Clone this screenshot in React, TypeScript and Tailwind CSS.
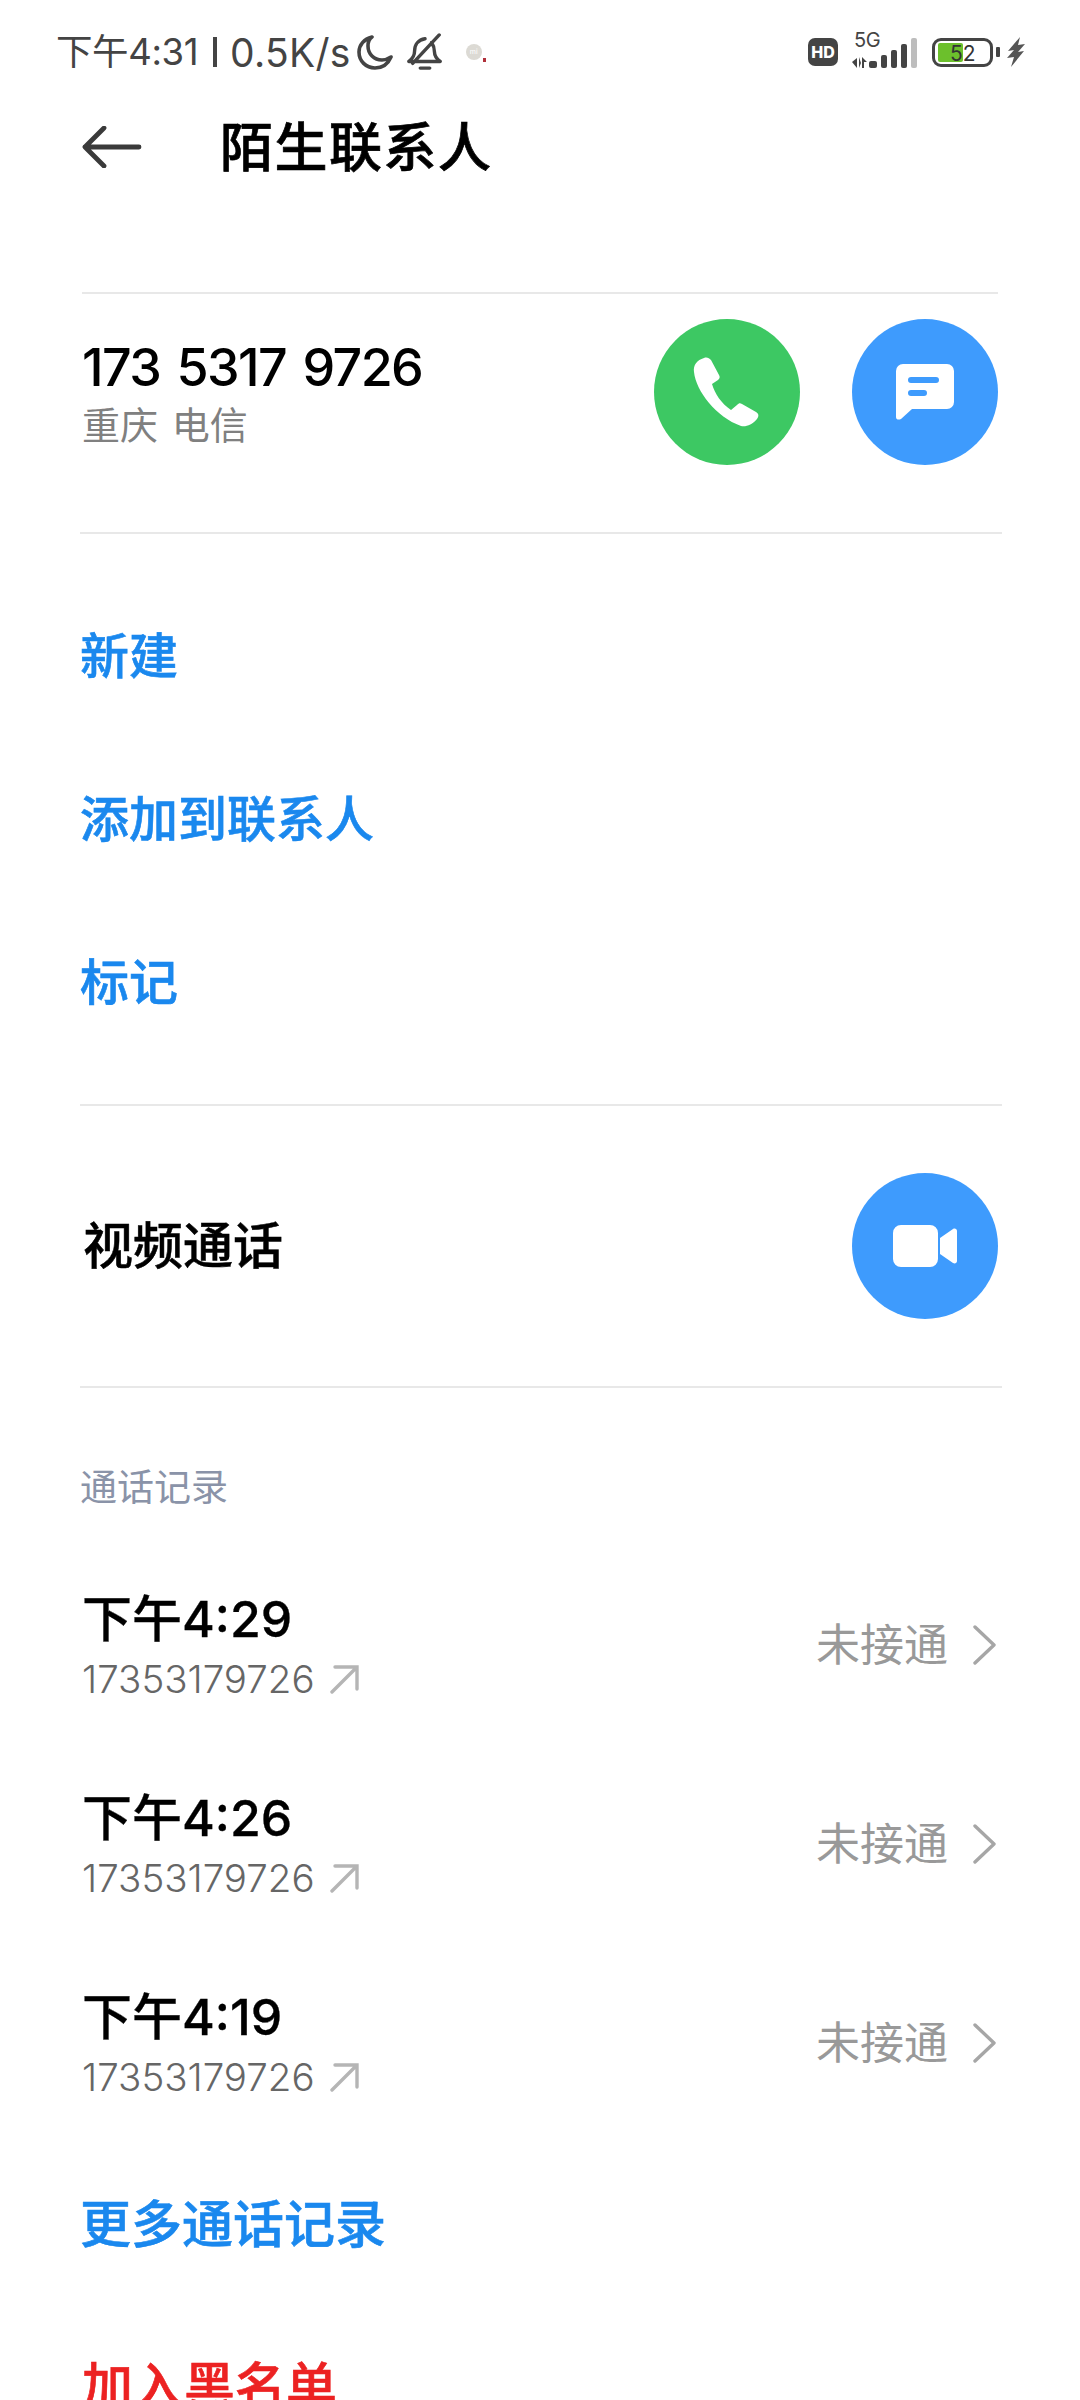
const cjk = "font-['Inter','Noto_Sans_CJK_SC',sans-serif]";

const calls = [
  { time: "下午4:29", number: "17353179726" },
  { time: "下午4:26", number: "17353179726" },
  { time: "下午4:19", number: "17353179726" },
];

function StatusBar() {
  return (
    <div className="flex h-[104px] items-center pl-[56px] pr-[55px] text-[#444444]">
      <span className="flex items-center leading-none">
        <span className="text-[36.5px] tracking-[-0.4px]">下午4:31</span>
        <span className="ml-[15px] mr-[13px] h-[30px] w-[4px] bg-[#444444]" />
        <span className="text-[39px] tracking-[0.3px]">0.5K/s</span>
      </span>
      <svg viewBox="0 0 36 36" className="ml-[6px] h-[36px] w-[36px]" fill="none" stroke="#444444" strokeWidth="3.6" strokeLinecap="round" strokeLinejoin="round">
        <path d="M15 3C7 5 2 11 2 18c0 9 7 16 16 16 7 0 13-4 16-11-3 2-6 3-9 3-8 0-14-6-14-14 0-3 1-7 4-9z" />
      </svg>
      <svg viewBox="0 0 38 40" className="ml-[14px] h-[38px] w-[36px]" fill="none" stroke="#444444" strokeWidth="3.6" strokeLinecap="round" strokeLinejoin="round">
        <path d="M2 30c4-3 6-6 6-11 0-7 4-12 11-13M26 10c2 3 3 6 3 10 0 4 2 7 6 10H2M34 2 6 32M14 37h10" />
      </svg>
      <span className="relative ml-[23px] flex h-[16px] w-[16px] items-center justify-center rounded-full bg-[#dcdad4] text-[7px] text-white">
        mi
        <span className="absolute bottom-[-2px] right-[-4px] h-[4px] w-[3px] bg-[#b0303a]" />
      </span>
      <span className="ml-auto flex h-[28px] w-[30px] items-center justify-center rounded-[7px] bg-[#444444] text-[16px] font-extrabold leading-none text-white">HD</span>
      <div className="relative ml-[14px] h-[36px] w-[68px]">
        <span className="absolute left-[2px] top-[-4px] text-[20px] leading-[20px] tracking-[-0.5px]">5G</span>
        <svg viewBox="0 0 68 36" className="h-[36px] w-[68px]" fill="#444444">
          <path d="M0 28l5-4v10zM7 23v11l2-5zM10 23l5 5h-3v6h-2z" />
          <rect x="17" y="27" width="8" height="7" rx="2" />
          <rect x="29" y="21" width="6" height="13" rx="2" />
          <rect x="39" y="16" width="6" height="18" rx="2" />
          <rect x="49" y="10" width="6" height="24" rx="2" />
          <rect x="59" y="4" width="6" height="30" rx="2" fill="#bdbdbd" />
        </svg>
      </div>
      <div className="relative ml-[12px] flex h-[29px] w-[61px] items-center rounded-[9px] border-[3px] border-[#444444] pl-[3px]">
        <div className="h-[19px] w-[25px] rounded-[2px] bg-[#6cc02c]" />
        <span className="absolute left-[15px] top-[-1px] text-[21px] leading-[27px] text-[#333333]">52</span>
      </div>
      <div className="ml-[3px] h-[10px] w-[4px] rounded-[1px] bg-[#444444]" />
      <svg viewBox="0 0 18 30" className="ml-[7px] h-[30px] w-[18px]" fill="#555555">
        <path d="M13 0 1 14l6-1-7 8 7-1-3 10L17 14l-6 1 7-8-7 1z" />
      </svg>
    </div>
  );
}

function RoundButton({ bg, children }: { bg: string; children: React.ReactNode }) {
  return (
    <div className={`flex h-[146px] w-[146px] shrink-0 items-center justify-center rounded-full ${bg}`}>
      {children}
    </div>
  );
}

function Divider({ className }: { className: string }) {
  return <div className={`h-[2px] bg-[#e8e8e8] ${className}`} />;
}

function ActionLink({ label }: { label: string }) {
  return (
    <div className="flex h-[163px] items-center pl-[80px] text-[49px] font-medium leading-none text-[#1a88ee] [-webkit-text-stroke:0.6px_#1a88ee]">
      {label}
    </div>
  );
}

function CallRow({ time, number }: { time: string; number: string }) {
  return (
    <div className="flex h-[199px] items-center justify-between pl-[82px] pr-[84px]">
      <div className="flex flex-col">
        <span className="text-[50px] font-medium leading-[60px] text-black [-webkit-text-stroke:0.3px_#000000]">{time}</span>
        <div className="flex items-center">
          <span className="text-[38.5px] font-light leading-[60px] text-[#666666]">{number}</span>
          <svg viewBox="0 0 30 30" className="ml-[14px] h-[30px] w-[30px]" fill="none" stroke="#b5b5b5" strokeWidth="3.4" strokeLinecap="round">
            <path d="M3 28 27 4M6 3h22v22" />
          </svg>
        </div>
      </div>
      <div className="mb-[8px] flex items-center text-[#999999]">
        <span className="text-[44px] leading-none">未接通</span>
        <svg viewBox="0 0 24 40" className="ml-[24px] h-[40px] w-[24px]" fill="none" stroke="#a6a6a6" strokeWidth="3.4" strokeLinecap="round" strokeLinejoin="round">
          <path d="M3 2l19 18L3 38" />
        </svg>
      </div>
    </div>
  );
}

export default function App() {
  return (
    <div className={`h-[2400px] w-[1080px] overflow-hidden bg-white ${cjk}`}>
      <StatusBar />

      <div className="flex h-[86px] items-center pl-[82px]">
        <svg viewBox="0 0 60 42" className="h-[42px] w-[60px]" fill="none" stroke="#3a3a3a" strokeWidth="4.8" strokeLinecap="round" strokeLinejoin="round">
          <path d="M57 21H3M22 2 3 21l19 19" />
        </svg>
        <h1 className="ml-[78px] mt-[2px] text-[53px] font-medium leading-none tracking-[1.5px] text-black [-webkit-text-stroke:0.7px_#000000]">陌生联系人</h1>
      </div>

      <Divider className="ml-[82px] mr-[82px] mt-[102px]" />

      <div className="flex h-[238px] items-center justify-between pb-[42px] pl-[82px] pr-[82px]">
        <div className="mt-[5px] flex flex-col">
          <span className="text-[52px] font-medium leading-[60px] tracking-[-1.6px] text-black [word-spacing:4px]">173 5317 9726</span>
          <span className="text-[38px] leading-[54px] text-[#808080] [word-spacing:3px]">重庆 电信</span>
        </div>
        <div className="flex gap-[52px]">
          <RoundButton bg="bg-[#3dc863]">
            <svg viewBox="0 0 70 70" className="h-[70px] w-[70px]" fill="white">
              <path d="M12 1C5 3 1 8 2 15c2 19 22 45 47 54 5 1 11-1 16-7 2-3 2-5-1-7L50 47c-2-1-3-1-5 1l-6 5C29 46 23 37 20 27l6-4c2-2 2-3 1-5L19 3c-2-2-4-3-7-2z" />
            </svg>
          </RoundButton>
          <RoundButton bg="bg-[#3e9bfd]">
            <svg viewBox="0 0 60 56" className="h-[56px] w-[60px]" fill="white">
              <path fillRule="evenodd" d="M8 0h44a7 7 0 0 1 7 7v31a7 7 0 0 1-7 7H17L6 55c-2 1-5 1-5-2V7a7 7 0 0 1 7-7zM16 13a3 3 0 0 0 0 6h25a3 3 0 0 0 0-6zM16 26a3 3 0 0 0 0 6h13a3 3 0 0 0 0-6z" />
            </svg>
          </RoundButton>
        </div>
      </div>

      <Divider className="ml-[80px] mr-[78px]" />

      <div className="pt-[41px]">
        <ActionLink label="新建" />
        <ActionLink label="添加到联系人" />
        <ActionLink label="标记" />
      </div>

      <Divider className="ml-[80px] mr-[78px] mt-[40px]" />

      <div className="flex h-[280px] items-center justify-between pl-[83px] pr-[82px]">
        <span className="text-[50px] font-medium leading-none text-black [-webkit-text-stroke:0.5px_#000000]">视频通话</span>
        <RoundButton bg="bg-[#3e9bfd]">
          <svg viewBox="0 0 64 42" className="h-[42px] w-[64px]" fill="white">
            <path d="M8 0h29a8 8 0 0 1 8 8v26a8 8 0 0 1-8 8H8a8 8 0 0 1-8-8V8a8 8 0 0 1 8-8zM47 13l13-9c2-1 4 0 4 2v30c0 2-2 3-4 2l-13-9z" />
          </svg>
        </RoundButton>
      </div>

      <Divider className="ml-[80px] mr-[78px]" />

      <div className="pl-[80px] pt-[80px] text-[37px] leading-[40px] text-[#8a93a8]">通话记录</div>

      <div className="mt-[41px]">
        {calls.map((c) => (
          <CallRow key={c.time} time={c.time} number={c.number} />
        ))}
      </div>

      <div className="mt-[8px] flex h-[140px] items-center pl-[80px] text-[51px] font-medium leading-none text-[#1a88ee] [-webkit-text-stroke:0.6px_#1a88ee]">更多通话记录</div>
      <div className="mt-[22px] flex h-[140px] items-center pl-[82px] text-[51px] font-medium leading-none text-[#ec2222] [-webkit-text-stroke:0.6px_#ec2222]">加入黑名单</div>
    </div>
  );
}
